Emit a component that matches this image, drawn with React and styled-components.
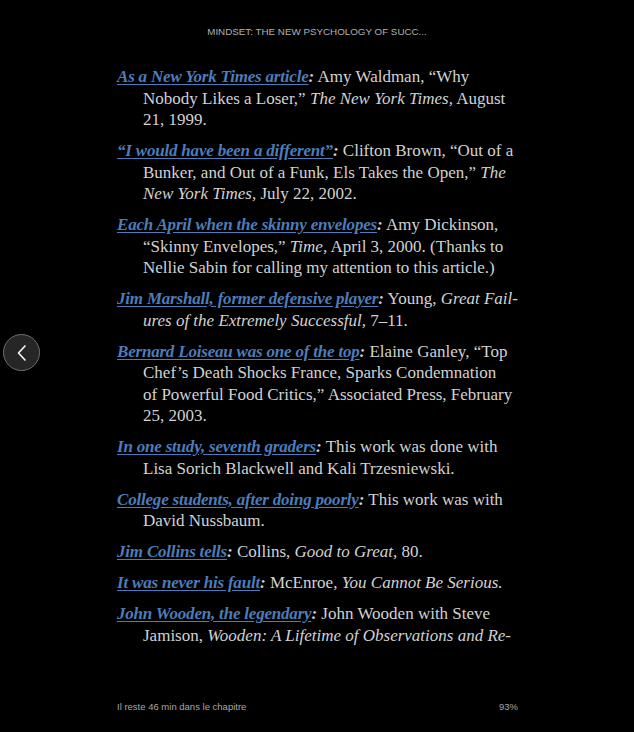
import React from "react";
import styled, { createGlobalStyle } from "styled-components";

const GlobalStyle = createGlobalStyle`
  html, body {
    margin: 0;
    padding: 0;
    background: #000;
  }
`;

const Page = styled.div`
  width: 634px;
  height: 732px;
  background: #000;
  display: grid;
  grid-template-columns: 117px 401px 1fr;
  grid-template-rows: 62px 1fr 32px;
  font-family: "Liberation Serif", serif;
  overflow: hidden;
`;

const Header = styled.div`
  grid-column: 1 / 4;
  display: flex;
  justify-content: center;
  align-items: flex-start;
  padding-top: 26px;
  font-family: "Liberation Sans", Arial, sans-serif;
  font-size: 9.8px;
  color: #b0b0b0;
`;

const Side = styled.div`
  display: flex;
  align-items: flex-start;
  padding-left: 3px;
  padding-top: 272px;
`;

const BackButton = styled.button`
  width: 37px;
  height: 37px;
  border-radius: 50%;
  border: 1.5px solid #6e6e6e;
  background: #262626;
  display: flex;
  align-items: center;
  justify-content: center;
  padding: 0;
`;

const Notes = styled.div`
  display: flex;
  flex-direction: column;
  gap: 9.5px;
  padding-top: 4px;
`;

const Note = styled.p`
  margin: 0;
  padding-left: 26px;
  text-indent: -26px;
  font-size: 17px;
  line-height: 21.5px;
  color: #d2d2d2;
  white-space: nowrap;
`;

const Cue = styled.a`
  color: #4d7cba;
  font-weight: bold;
  font-style: italic;
  letter-spacing: -0.2px;
  text-decoration: underline;
  text-underline-offset: 2px;
`;

const Colon = styled.span`
  font-weight: bold;
  font-style: italic;
`;

const Footer = styled.div`
  grid-column: 2 / 3;
  display: flex;
  justify-content: space-between;
  align-items: flex-start;
  padding-top: 1px;
  font-family: "Liberation Sans", Arial, sans-serif;
  font-size: 9.5px;
  color: #a8a8a8;
`;

const notes = [
  {
    cue: "As a New York Times article",
    body: [
      <>Amy Waldman, “Why</>,
      <>Nobody Likes a Loser,” <i>The New York Times,</i> August</>,
      <>21, 1999.</>,
    ],
  },
  {
    cue: "“I would have been a different”",
    body: [
      <>Clifton Brown, “Out of a</>,
      <>Bunker, and Out of a Funk, Els Takes the Open,” <i>The</i></>,
      <><i>New York Times,</i> July 22, 2002.</>,
    ],
  },
  {
    cue: "Each April when the skinny envelopes",
    body: [
      <>Amy Dickinson,</>,
      <>“Skinny Envelopes,” <i>Time,</i> April 3, 2000. (Thanks to</>,
      <>Nellie Sabin for calling my attention to this article.)</>,
    ],
  },
  {
    cue: "Jim Marshall, former defensive player",
    body: [
      <>Young, <i>Great Fail-</i></>,
      <><i>ures of the Extremely Successful,</i> 7–11.</>,
    ],
  },
  {
    cue: "Bernard Loiseau was one of the top",
    body: [
      <>Elaine Ganley, “Top</>,
      <>Chef’s Death Shocks France, Sparks Condemnation</>,
      <>of Powerful Food Critics,” Associated Press, February</>,
      <>25, 2003.</>,
    ],
  },
  {
    cue: "In one study, seventh graders",
    body: [
      <>This work was done with</>,
      <>Lisa Sorich Blackwell and Kali Trzesniewski.</>,
    ],
  },
  {
    cue: "College students, after doing poorly",
    body: [<>This work was with</>, <>David Nussbaum.</>],
  },
  {
    cue: "Jim Collins tells",
    body: [<>Collins, <i>Good to Great,</i> 80.</>],
  },
  {
    cue: "It was never his fault",
    body: [<>McEnroe, <i>You Cannot Be Serious.</i></>],
  },
  {
    cue: "John Wooden, the legendary",
    body: [
      <>John Wooden with Steve</>,
      <>Jamison, <i>Wooden: A Lifetime of Observations and Re-</i></>,
    ],
  },
];

export default function App() {
  return (
    <>
      <GlobalStyle />
      <Page>
        <Header>MINDSET: THE NEW PSYCHOLOGY OF SUCC...</Header>
        <Side>
          <BackButton aria-label="Précédent">
            <svg width="14" height="18" viewBox="0 0 14 18" fill="none">
              <path
                d="M10 2 L3.5 9 L10 16"
                stroke="#f2f2f2"
                strokeWidth="1.7"
                strokeLinecap="round"
                strokeLinejoin="round"
              />
            </svg>
          </BackButton>
        </Side>
        <Notes>
          {notes.map((n, i) => (
            <Note key={i}>
              <Cue>{n.cue}</Cue>
              <Colon>:</Colon>{" "}
              {n.body.map((line, j) => (
                <React.Fragment key={j}>
                  {j > 0 && <br />}
                  {line}
                </React.Fragment>
              ))}
            </Note>
          ))}
        </Notes>
        <div />
        <div />
        <Footer>
          <span>Il reste 46 min dans le chapitre</span>
          <span>93%</span>
        </Footer>
      </Page>
    </>
  );
}
